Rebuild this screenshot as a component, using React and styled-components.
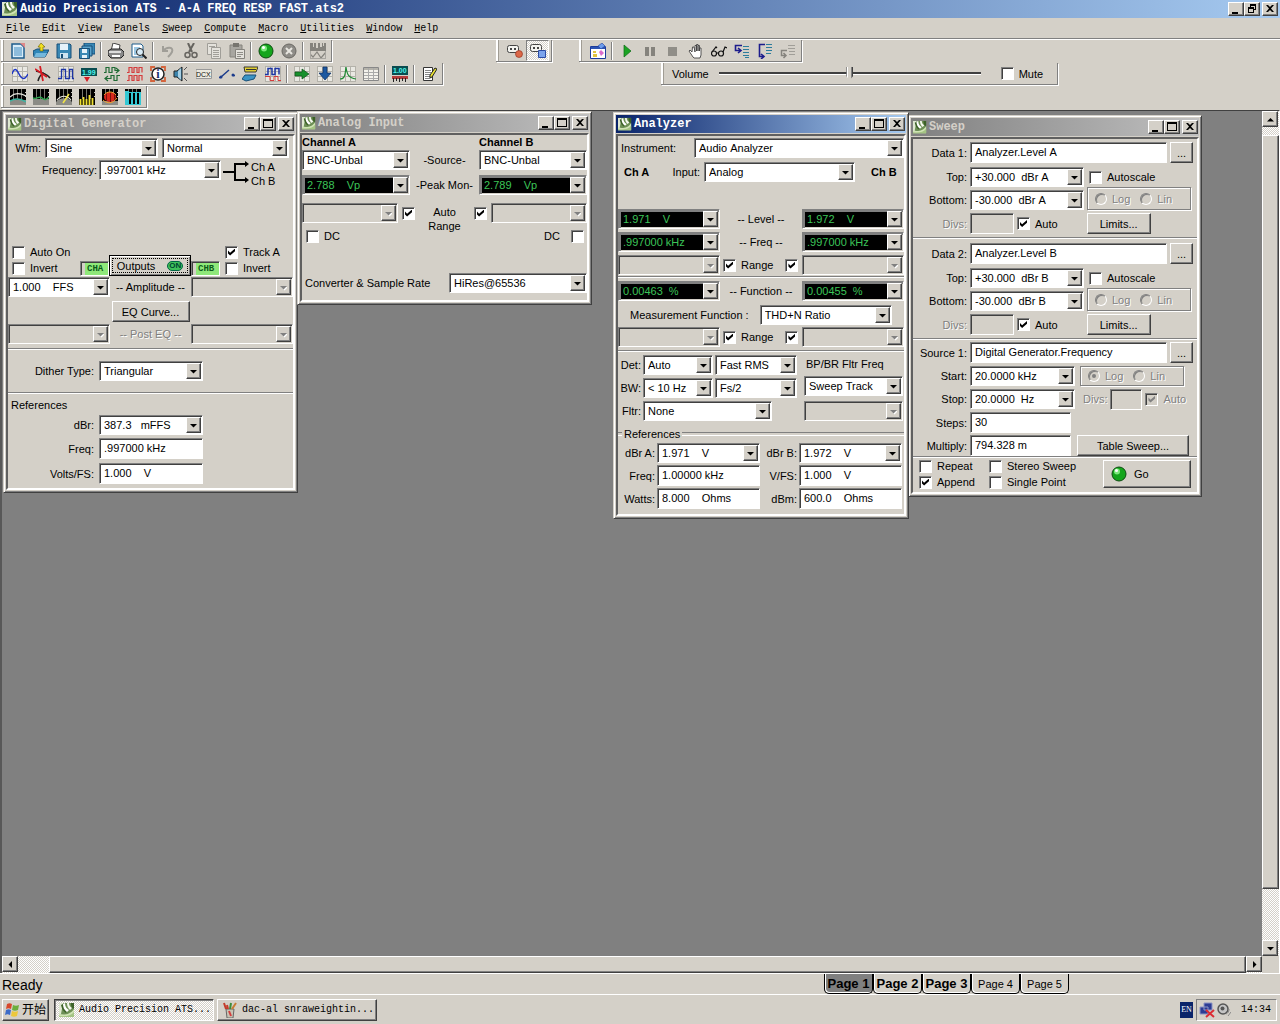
import React, { useState } from "react"
import styled, { createGlobalStyle, css } from "styled-components"

const FACE = "#d4d0c8"
const SHADE = "#808080"
const DARK = "#404040"
const UI = `"Liberation Sans", Arial, sans-serif`
const MONO = `"Liberation Mono", "Noto Sans CJK SC", monospace`

const GlobalStyle = createGlobalStyle`
* { box-sizing: border-box; }
body {
  margin: 0;
  background: ${FACE};
  color: #000;
  font: 11px/14px ${UI};
}
button, input, select {
  margin: 0;
  font: inherit;
  color: inherit;
}
`

const raised = css`
  border: 1px solid;
  border-color: #fff ${DARK} ${DARK} #fff;
  box-shadow: inset -1px -1px ${SHADE};
  background: ${FACE};
`
const sunken = css`
  border: 1px solid;
  border-color: ${SHADE} #fff #fff ${SHADE};
  box-shadow: inset 1px 1px ${DARK};
`
const dither = css`
  background: repeating-conic-gradient(#fff 0 25%, ${FACE} 0 50%) 0 0 / 2px 2px;
`
const embossed = css`
  color: ${SHADE};
  text-shadow: 1px 1px #fff;
`

/* ---------- shell ---------- */
const Shell = styled.div`
  display: flex;
  flex-direction: column;
  min-height: 100vh;
  background: ${FACE};
`
const AppTitle = styled.header`
  display: flex;
  align-items: center;
  height: 18px;
  padding: 0 2px;
  gap: 2px;
  color: #fff;
  font: bold 12px/18px ${MONO};
  background: linear-gradient(90deg, #0a246a, #a6caf0);
`
const TitleText = styled.span`
  flex: 1;
  white-space: nowrap;
`
const TitleButtons = styled.div`
  display: flex;
  & > button:last-child { margin-left: 2px; }
`
const CaptionButton = styled.button`
  ${raised}
  display: flex;
  width: 16px;
  height: 14px;
  padding: 0;
  align-items: center;
  justify-content: center;
`
const MenuBar = styled.nav`
  display: flex;
  align-items: center;
  gap: 12px;
  height: 22px;
  padding: 0 6px;
  font: 10px/14px ${MONO};
  border-bottom: 1px solid #fff;
  box-shadow: inset 0 -1px ${SHADE};
`
const MenuItem = styled.button`
  border: 0;
  padding: 0;
  background: none;
  &::first-letter { text-decoration: underline; }
`
const ToolRows = styled.div`
  display: flex;
  flex-direction: column;
  gap: 1px;
  padding-bottom: 2px;
`
const ToolRow = styled.div`
  display: flex;
  height: 22px;
  padding-left: 1px;
`
const Band = styled.div`
  display: flex;
  align-items: center;
  margin-left: ${p => p.$left || 0}px;
  padding-right: 2px;
  border-right: 1px solid ${SHADE};
  border-bottom: 1px solid ${SHADE};
  box-shadow: 1px 1px #fff;
`
const Grip = styled.span`
  width: 5px;
  align-self: stretch;
  margin-right: ${p => p.$gap || 0}px;
  background: #fff;
  border-right: 2px solid ${FACE};
  box-shadow: inset -1px 0 #a09c94;
`
const ToolButton = styled.button`
  display: flex;
  align-items: center;
  justify-content: center;
  width: 23px;
  height: 21px;
  padding: 0;
  border: 0;
  background: none;
  ${p => p.$pressed && css`
    ${dither}
    border: 1px solid;
    border-color: ${SHADE} #fff #fff ${SHADE};
  `}
`
const ToolDivider = styled.span`
  width: 2px;
  height: 18px;
  margin: 0 2px;
  border-left: 1px solid ${SHADE};
  border-right: 1px solid #fff;
`
const VolumeLabel = styled.label`
  display: flex;
  align-items: center;
  gap: 10px;
  margin-left: 6px;
`
const VolumeSlider = styled.input`
  appearance: none;
  width: 262px;
  height: 16px;
  background: none;
  &::-webkit-slider-runnable-track {
    height: 3px;
    background: linear-gradient(${DARK} 0 2px, #fff 2px);
  }
  &::-webkit-slider-thumb {
    appearance: none;
    width: 7px;
    height: 13px;
    margin-top: -5px;
    background: linear-gradient(90deg, ${SHADE} 0 1px, #fff 1px 2px, ${FACE} 2px 5px, ${SHADE} 5px 6px, ${DARK} 6px);
    clip-path: polygon(0 0, 100% 0, 100% 70%, 50% 100%, 0 70%);
  }
`

/* ---------- workspace ---------- */
const Workspace = styled.main`
  flex: 1;
  display: grid;
  grid-template: 1fr 17px / 1fr 17px;
  border-top: 1px solid ${DARK};
  border-left: 2px solid #585858;
  border-right: 1px solid #fff;
`
const Canvas = styled.div`
  position: relative;
  overflow: hidden;
  min-height: 420px;
  background: ${SHADE};
`
const ScrollBar = styled.div`
  ${dither}
  display: flex;
  flex-direction: ${p => (p.$vertical ? "column" : "row")};
`
const ScrollButton = styled.button`
  ${raised}
  display: flex;
  align-items: center;
  justify-content: center;
  flex: none;
  width: 16px;
  height: 16px;
  padding: 0;
`
const ScrollThumb = styled.div`
  ${raised}
  flex: ${p => p.$grow};
`
const ScrollGap = styled.div`
  flex: ${p => p.$grow};
`

const Frame = styled.section`
  position: absolute;
  left: ${p => p.$x}px;
  top: ${p => p.$y}px;
  width: ${p => p.$w}px;
  height: ${p => p.$h}px;
  display: flex;
  flex-direction: column;
  gap: 1px;
  padding: 2px;
  background: ${FACE};
  border: 1px solid;
  border-color: ${FACE} ${DARK} ${DARK} ${FACE};
  box-shadow: inset 1px 1px #fff, inset -1px -1px ${SHADE};
`
const FrameTitle = styled.header`
  display: flex;
  align-items: center;
  gap: 2px;
  height: 18px;
  padding: 0 1px 0 2px;
  font: bold 12px/18px ${MONO};
  color: ${p => (p.$active ? "#fff" : FACE)};
  background: ${p => (p.$active
    ? "linear-gradient(90deg, #0a246a, #a6caf0)"
    : "linear-gradient(90deg, #808080, #c0c0c0)")};
`
const Client = styled.div`
  flex: 1;
  border: 2px solid;
  border-color: #606060 #fff #fff #606060;
`

/* ---------- form parts ---------- */
const Row = styled.div`
  display: flex;
  align-items: ${p => p.$align || "center"};
  justify-content: ${p => p.$justify || "flex-start"};
  height: ${p => p.$h || 20}px;
  margin-top: ${p => p.$top || 0}px;
  padding-left: ${p => p.$indent || 0}px;
  gap: ${p => p.$gap || 0}px;
`
const Column = styled.div`
  width: ${p => (p.$w ? p.$w + "px" : "auto")};
  margin-left: ${p => p.$left || 0}px;
`
const Caption = styled.label`
  flex: none;
  width: ${p => (p.$w ? p.$w + "px" : "auto")};
  text-align: right;
  white-space: nowrap;
  ${p => p.$off && embossed}
`
const Middle = styled.span`
  flex: 1;
  text-align: center;
  white-space: nowrap;
  ${p => p.$off && embossed}
`
const Strong = styled.span`
  width: ${p => (p.$w ? p.$w + "px" : "auto")};
  padding-left: ${p => p.$indent || 0}px;
  font-weight: bold;
`
const TwoLines = styled.span`
  flex: 1;
  padding-top: 2px;
  text-align: center;
`
const Rule = styled.hr`
  width: 100%;
  height: 2px;
  margin: ${p => p.$top || 0}px 0 0;
  border: 0;
  border-top: 1px solid ${SHADE};
  border-bottom: 1px solid #fff;
`
const GroupTitle = styled.h3`
  display: flex;
  align-items: center;
  gap: 2px;
  height: 14px;
  margin: ${p => p.$top}px 0 0;
  padding-left: ${p => (p.$line ? 0 : 3)}px;
  font: inherit;
  ${p => p.$line && css`
    &::before, &::after {
      content: "";
      width: 4px;
      height: 2px;
      border-top: 1px solid ${SHADE};
      border-bottom: 1px solid #fff;
    }
    &::after { flex: 1; }
  `}
`
const ComboBox = styled.span`
  ${sunken}
  display: flex;
  flex: none;
  width: ${p => p.$w}px;
  height: 20px;
  padding: 1px;
  background: ${p => (p.$off ? FACE : p.$led ? "#000" : "#fff")};
  color: ${p => (p.$led ? "#3cc458" : "#000")};
  ${p => p.$led && css`box-shadow: inset 2px 2px ${SHADE}, inset -1px -1px ${FACE};`}
`
const ComboSelect = styled.select`
  appearance: none;
  flex: 1;
  min-width: 0;
  padding: 0 0 0 3px;
  border: 0;
  outline: 0;
  background: none;
  opacity: 1;
`
const ComboArrow = styled.span`
  ${raised}
  display: flex;
  align-items: center;
  justify-content: center;
  width: 15px;
  pointer-events: none;
`
const TextField = styled.input`
  ${sunken}
  flex: none;
  width: ${p => p.$w}px;
  height: 21px;
  padding: 0 4px 2px;
  outline: 0;
  background: ${p => (p.disabled ? FACE : "#fff")};
`
const PushButton = styled.button`
  ${raised}
  display: flex;
  align-items: center;
  justify-content: center;
  flex: none;
  width: ${p => p.$w}px;
  height: ${p => p.$h || 21}px;
  margin-left: ${p => p.$left || 0}px;
  padding: 0;
  white-space: nowrap;
`
const OutputsButton = styled(PushButton)`
  gap: 12px;
  border-color: #000;
  box-shadow: inset 1px 1px #fff, inset -1px -1px ${SHADE};
  outline: 1px dotted #000;
  outline-offset: -4px;
`
const GoButton = styled(PushButton)`
  justify-content: flex-start;
  gap: 7px;
  padding-left: 7px;
`
const OnPill = styled.span`
  width: 16px;
  height: 10px;
  border: 1px solid #064;
  border-radius: 5px;
  background: #3fc05a;
  color: #043;
  font: bold 8px/8px ${UI};
  text-align: center;
`
const Lamp = styled.span`
  ${sunken}
  width: 29px;
  height: 15px;
  padding-left: 6px;
  background: linear-gradient(90deg, ${FACE} 0 4px, #8fe87a 4px);
  color: #0a5a18;
  font: bold 9px/14px ${MONO};
`
const CheckLabel = styled.label`
  display: flex;
  align-items: center;
  height: 16px;
  gap: 5px;
  white-space: nowrap;
  ${p => p.$off && embossed}
`
const TrailingCheck = styled(CheckLabel)`
  gap: 11px;
  padding-right: 3px;
`
const Tick = styled.input`
  ${sunken}
  appearance: none;
  flex: none;
  width: 13px;
  height: 13px;
  background: ${p => (p.disabled ? FACE : "#fff")};
  &:checked::before {
    content: "";
    display: block;
    width: 7px;
    height: 7px;
    margin: 2px;
    background: ${p => (p.disabled ? SHADE : "#000")};
    clip-path: polygon(0 30%, 30% 60%, 100% 0, 100% 40%, 30% 100%, 0 72%);
  }
`
const RadioGroup = styled.div`
  display: flex;
  align-items: center;
  gap: 10px;
  width: 104px;
  height: ${p => p.$h}px;
  padding-left: 7px;
  border: 1px solid ${SHADE};
  box-shadow: 1px 1px #fff, inset 1px 1px #fff;
`
const Radio = styled.input`
  appearance: none;
  width: 12px;
  height: 12px;
  border: 1px solid;
  border-color: ${SHADE} #fff #fff ${SHADE};
  border-radius: 50%;
  box-shadow: inset 1px 1px ${SHADE};
  &:checked::before {
    content: "";
    display: block;
    width: 4px;
    height: 4px;
    margin: 3px;
    border-radius: 50%;
    background: ${SHADE};
  }
`

/* ---------- status bar and taskbar ---------- */
const StatusBar = styled.footer`
  display: flex;
  align-items: flex-start;
  height: 22px;
  border-top: 1px solid #fff;
  border-bottom: 1px solid #fff;
`
const StatusText = styled.span`
  width: 824px;
  padding: 4px 2px 0;
  font-size: 14px;
`
const PageTab = styled.button`
  width: 49px;
  height: 20px;
  padding: 0;
  border: 1px solid #000;
  border-top: 0;
  border-radius: 0 0 5px 5px;
  box-shadow: inset 1px -1px #fff;
  background: ${p => (p.$current ? SHADE : FACE)};
  font: ${p => (p.$strong ? "bold 13px" : "11px")}/20px ${UI};
  white-space: nowrap;
`
const Taskbar = styled.footer`
  display: flex;
  align-items: center;
  height: 29px;
  padding: 0 3px 0 2px;
  font: 10px/14px ${MONO};
`
const StartButton = styled.button`
  ${raised}
  display: flex;
  align-items: center;
  gap: 1px;
  width: 47px;
  height: 22px;
  margin-right: 5px;
  padding: 0 1px;
  font: 12px/18px "Liberation Sans", "Noto Sans CJK SC", sans-serif;
`
const TaskButton = styled.button`
  ${raised}
  display: flex;
  align-items: center;
  gap: 4px;
  width: 160px;
  height: 22px;
  margin-right: 3px;
  padding: 0 4px;
  white-space: nowrap;
  ${p => p.$pressed && css`
    ${dither}
    border-color: ${DARK} #fff #fff ${DARK};
    box-shadow: inset 1px 1px ${SHADE};
  `}
`
const Language = styled.span`
  width: 13px;
  height: 16px;
  margin: 0 3px 0 auto;
  background: #0a246a;
  color: #fff;
  font: 8px/16px "Liberation Serif", serif;
  text-align: center;
`
const Tray = styled.div`
  display: flex;
  align-items: center;
  gap: 2px;
  width: 81px;
  height: 22px;
  padding: 0 2px;
  border: 1px solid;
  border-color: ${SHADE} #fff #fff ${SHADE};
`
const Clock = styled.time`
  margin-left: auto;
  padding-right: 3px;
`

/* ---------- drawings ---------- */
const Drawing = styled.svg`
  display: block;
  flex: none;
`
const LeafLogo = ({ size = 16 }) => (
  <Drawing width={size} height={size} viewBox="0 0 16 16">
    <path d="M0 1h15v14H0z" fill="#6d8f55" />
    <path d="M0 1h4L2 12l-2 2z" fill="#dfe8d2" />
    <path d="M2 3c1 4 2 6 5 8l1-2C6 7 5 5 4 2z" fill="#3c6128" />
    <path d="M4 2l2-1c0 4 2 6 4 7l-2 2C5 8 4 5 4 2z" fill="#fff" />
    <path d="M8 1h2c0 2 1 4 3 5l-2 2C9 6 8 4 8 1z" fill="#f4f8ee" />
    <path d="M12 1h3v5l-1 1c-2-2-2-4-2-6z" fill="#3c6128" />
    <path d="M0 12c5 1 11 1 15-5v8H0z" fill="#cfe3b4" />
    <path d="M0 14c6 1 12 0 15-4v5H0z" fill="#a4c483" />
  </Drawing>
)
const Arrow = ({ off, dir = "down" }) => {
  const d = {
    down: "M0 2h7L3.500 5.500z",
    up: "M0 5.500h7L3.500 2z",
    left: "M5 0v7L1.500 3.500z",
    right: "M2 0v7l3.500-3.500z",
  }[dir]
  return (
    <Drawing width="7" height="7" viewBox="0 0 7 7">
      {off && <path d={d} fill="#fff" transform="translate(1 1)" />}
      <path d={d} fill={off ? SHADE : "#000"} />
    </Drawing>
  )
}
const captionShapes = {
  Minimize: <path d="M1 8h6v2H1z" />,
  Maximize: <path d="M0 0h10v9H0zM1 2v6h8V2z" fillRule="evenodd" />,
  Restore: <path d="M3 0h6v6H7v3H1V3h2zM4 2v1h3v2h1V2zM2 5v3h4V5z" fillRule="evenodd" />,
  Close: <path d="M1 1h2l2 2 2-2h2L6 4.500 9 8H7L5 6 3 8H1l3-3.500z" />,
}
const CaptionButtons = ({ middle = "Maximize" }) => (
  <TitleButtons>
    {["Minimize", middle, "Close"].map(n => (
      <CaptionButton key={n} aria-label={n}>
        <Drawing width="10" height="10" viewBox="0 0 10 10">{captionShapes[n]}</Drawing>
      </CaptionButton>
    ))}
  </TitleButtons>
)

const grid = (
  <>
    <path d="M0 0h16v16H0z" fill="#e9e8e2" />
    <path d="M.5 0v16M5.500 0v16M10.500 0v16M15.500 0v16M0 .5h16M0 5.500h16M0 10.500h16M0 15.500h16" stroke="#b4b2aa" />
  </>
)
// black screen with a dotted graticule over a grey base
const plot = (
  <>
    <path d="M0 0h16v16H0z" fill="#000" />
    <path d="M0 3.500h16M0 7.500h16" stroke="#c8c8c0" strokeDasharray="1 3" strokeDashoffset="1" />
    <path d="M3.500 0v10M7.500 0v10M11.500 0v10" stroke="#77776f" />
  </>
)
const line = (d, stroke, width = 1) => <path d={d} fill="none" stroke={stroke} strokeWidth={width} />
const digits = (x, y, text, fill) => (
  <text x={x} y={y} fill={fill} fontFamily="Liberation Sans" fontWeight="bold" fontSize="7">{text}</text>
)

const icons = {
  new: <><path d="M2 1h9l3 3v11H2z" fill="#d8ecf8" stroke="#1c5c8c" strokeWidth="1.500" /><path d="M4 4h8v9H4z" fill="#8cbcdc" /><path d="M10 0h5v5z" fill="#e08888" /></>,
  open: <><path d="M0 8l4-2h3l1 1h8l-4 7H1z" fill="#2f86b8" stroke="#174f78" /><path d="M3 10h11l-2 4H1z" fill="#74b8dc" /><path d="M8 0l4 4h-2v4H7V4H5z" fill="#f2e020" stroke="#6a6000" strokeWidth=".6" /></>,
  save: <><path d="M1 1h13l1 1v13H1z" fill="#3a88b4" stroke="#174f78" /><path d="M4 1h8v6H4z" fill="#e4f2fa" /><path d="M4 10h8v5H4z" fill="#cfe4f0" /><path d="M5 11h2v4H5z" fill="#174f78" /></>,
  saveAll: <><path d="M5 0h11v11H5z" fill="#3a88b4" stroke="#174f78" /><path d="M3 3h10v10H3z" fill="#5aa4cc" stroke="#174f78" /><path d="M.5 5.500h10v10H.5z" fill="#3a88b4" stroke="#174f78" /><path d="M3 6h5v4H3zM3 12h5v3H3z" fill="#e4f2fa" /></>,
  print: <><path d="M5 0l7 2-1 6H3z" fill="#fff" stroke="#444" /><path d="M0 8l3-2h10l3 3v3l-3 3H3l-3-3z" fill="#888" stroke="#222" /><path d="M1 8h12v2H1z" fill="#ddd" /><path d="M4 12h8v2H4z" fill="#fff" /></>,
  preview: <><path d="M1 1h9l2 2v11H1z" fill="#fff" stroke="#1c5c8c" /><path d="M3 4h6v8H3z" fill="#9cc8e4" /><circle cx="9" cy="9" r="3.500" fill="#d8ecf8" stroke="#222" />{line("M11.500 11.500l4 4", "#222", 2)}</>,
  undo: <>{line("M3 3v5h5M3 8c4-5 11-4 9 1-1 2-3 4-4 5", "#a09e98", 2)}</>,
  cut: <>{line("M5 0l4 9M11 0L6 9", "#66645f", 2)}<circle cx="4.500" cy="12" r="2.500" fill="none" stroke="#66645f" strokeWidth="1.500" /><circle cx="11.500" cy="12" r="2.500" fill="none" stroke="#66645f" strokeWidth="1.500" /></>,
  copy: <><path d="M1.500.5h9v11h-9z" fill="#e4e2dc" stroke="#a09e98" /><path d="M5.500 4.500h9v11h-9z" fill="#e4e2dc" stroke="#a09e98" />{line("M7 7.500h6M7 9.500h6M7 11.500h6M7 13.500h6M3 3.500h6", "#a09e98")}</>,
  paste: <><path d="M1 2h12v12H1z" fill="#a8a6a0" stroke="#85837d" /><path d="M4 0h6v4H4z" fill="#77756f" /><path d="M6.500 6.500h9v9h-9z" fill="#e4e2dc" stroke="#85837d" />{line("M8 9.500h6M8 11.500h6M8 13.500h4", "#908e88")}</>,
  go: <><circle cx="8" cy="8" r="7" fill="#14a51c" stroke="#0c4a10" /><circle cx="6" cy="5.500" r="3" fill="#7ce87c" /><circle cx="5.500" cy="4.500" r="1.500" fill="#fff" /></>,
  stop: <><circle cx="8" cy="8" r="7" fill="#8e8c87" stroke="#6a6863" />{line("M5 5l6 6M11 5l-6 6", "#e8e6e0", 2)}</>,
  sweepGraph: <><path d="M0 0h16v8H0z" fill="#85837d" /><path d="M3 0h1v4H3zM6 0h2v5H6zM10 0h2v4h-2zM13 0h1v3h-1z" fill={FACE} />{line("M0 11l3 3 4-5 4 6 5-6", "#85837d", 1.200)}{line("M.5 8v8M15.500 8v8M0 15.500h16", "#a8a6a0")}</>,
  sine: <>{grid}{line("M0 8c2-6 4-6 7 0s6 6 9 0", "#1c34c4", 1.500)}</>,
  meter: <>{line("M1 5c5 1 11 3 14 7M3 15c1-4 3-7 6-8", "#222", 1.500)}{line("M5 0l3 15M0 3l12 8", "#d41c24", 1.800)}</>,
  square: <>{grid}{line("M0 12.500h3.500v-9h4v9h4v-9h3v9h2", "#1c34a4", 1.300)}</>,
  readout: <><path d="M0 2h16v8H0z" fill="#0a4c50" />{digits(1, 9, "1.99", "#4cf4ec")}<path d="M3 11h6l-3 5z" fill="#d41c24" /></>,
  digitalIo: <>{line("M0 6.500h2v-5h3v5h3v-5h3v3h4M12 2l3 2.500-3 2.500", "#1f6a34", 1.200)}{line("M16 9.500h-3v5h-3v-5H7v3H1M4 10l-3 2.500L4 15", "#1f6a34", 1.200)}</>,
  bits: <>{line("M0 6.500h2v-5h3v5h2v-5h3v5h2v-5h3v5M0 14.500h2v-5h3v5h2v-5h3v5h2v-5h3v5", "#d43c3c", 1.200)}</>,
  info: <>{line("M1 5V1h4M11 1h4v4M1 11v4h4M11 15h4v-4", "#d4643c", 1.800)}<circle cx="8" cy="8" r="6" fill="#fff" stroke="#222" strokeWidth="1.500" /><text x="8" y="12" textAnchor="middle" fill="#1c2c6c" fontFamily="Liberation Serif" fontWeight="bold" fontSize="12">i</text></>,
  speaker: <><path d="M1 5h3l5-4v14l-5-4H1z" fill="#3c84ac" stroke="#222" /><path d="M5 5l3-3v12l-3-3z" fill="#a8d0e4" />{line("M11 4l3-3M11 8h4M11 12l3 3", "#555")}</>,
  dcx: <><path d="M0 3.500h15.500v9H0z" fill="#eceadf" stroke="#999" /><text x="0" y="11" fill="#111" fontFamily="Liberation Sans" fontSize="7">DCX</text></>,
  relay: <><circle cx="2" cy="11" r="1.500" fill="#1c3c8c" /><circle cx="14" cy="9" r="1.500" fill="#1c3c8c" />{line("M2 11l8-7M0 11.500h2M14 9.500h2", "#1c3c8c", 1.500)}</>,
  cable: <><path d="M2 1h14l-2 5H3z" fill="#f0dc30" stroke="#333" />{line("M4 3.500h10", "#333", 1.200)}<path d="M3 9h11l-2 4-8 2-4-2z" fill="#3c94c4" stroke="#174f78" /></>,
  clocks: <>{grid}{line("M0 8.500h3v-6h4v6h3v-6h4v6", "#1c34a4", 1.500)}{line("M0 10.500h5v4h4v-4h4v4h3", "#d43c3c")}</>,
  toData: <>{grid}<path d="M1 6h7V3l7 5-7 5v-3H1z" fill="#17902c" stroke="#0c5018" strokeWidth=".7" /></>,
  toTable: <>{grid}<path d="M6 1h4v6h4l-6 7-6-7h4z" fill="#1c58a0" stroke="#0c2c60" strokeWidth=".7" /></>,
  graph: <>{grid}{line("M0 13c5 0 5-4 6-12 1 8 3 11 10 12", "#1f8a34", 1.200)}</>,
  table: <><path d="M.5 1.500h15v13H.5z" fill="#f4f2ec" stroke="#888" /><path d="M1 2h14v2H1z" fill="#b4b2aa" />{line("M1 6.500h14M1 9.500h14M1 12.500h14M5.500 2v12M10.500 2v12", "#aaa")}</>,
  bargraph: <><path d="M0 0h16v9H0z" fill="#0a4c50" />{digits(1, 7, "1.00", "#4cf4ec")}<path d="M0 10h16v3H0z" fill="#b43c3c" />{line("M1.500 12v4M4.500 12v3M7.500 12v4M10.500 12v3M13.500 12v4", "#222")}</>,
  notes: <><path d="M2.500 1.500h9v13h-9z" fill="#fff" stroke="#333" />{line("M4 4.500h6M4 6.500h6M4 8.500h5M4 10.500h6M4 12.500h5", "#888")}<path d="M9 9l5-7 2 1-5 8-2 1z" fill="#e8e030" stroke="#222" /></>,
  plotA: <>{plot}<path d="M0 11h16v5H0z" fill="#8c8c86" />{line("M0 8c4-4 10-4 16-1", "#e8e8e0", 1.200)}{line("M0 12c5-3 10-3 16 1", "#3cb4a0", 1.500)}</>,
  plotB: <>{plot}<path d="M0 10h16v6H0z" fill="#8c8c86" />{line("M0 9c4 2 6-3 9 0s5 1 7-1", "#2ca44c", 1.500)}</>,
  plotC: <>{plot}<path d="M0 13c3-5 13-5 16 0v3H0z" fill="#8c8c86" />{line("M1 11c4-5 10-5 14 0", "#e8e8e0", 1.200)}{line("M7 14l6-9", "#f0e448", 1.600)}</>,
  plotD: <>{plot}{line("M1.500 16v-6M4.500 16V8M7.500 16V10M10.500 16V6M13.500 16V9", "#f0e030", 1.800)}</>,
  plotE: <>{plot}<path d="M0 12h16v4H0z" fill="#8c8c86" /><ellipse cx="8" cy="8" rx="6" ry="5" fill="#d8281c" />{line("M4.500 4v8M8.500 3v10M12.500 4v8", "#7a120c")}{line("M1 11c4 4 10 4 14-2M2 6c3-4 9-4 12 0", "#f0a030")}</>,
  plotF: <>{plot}<path d="M0 2h4v14H0zM6 4h2v12H6zM10 4h2v12h-2zM14 4h2v12h-2z" fill="#34c8d4" />{line("M0 3.500h16M0 15.500h16", "#34c8d4")}</>,
  record: <><rect x=".5" y="2.500" width="11" height="7" rx="2" fill="#f4f4f0" stroke="#444" /><path d="M3 5h2v2H3zM7 5h2v2H7z" fill="#444" /><circle cx="12" cy="11" r="3.500" fill="#dc6848" stroke="#8c2818" strokeWidth=".6" /></>,
  recordStop: <><rect x=".5" y="1.500" width="11" height="7" rx="2" fill="#f4f4f0" stroke="#444" /><path d="M3 4h2v2H3zM7 4h2v2H7z" fill="#444" /><path d="M8.500 7.500h7v7h-7z" fill="#7ca4ec" stroke="#2c4ca4" /></>,
  macro: <><path d="M.5 3.500h15v12H.5z" fill="#fff" stroke="#1c3c9c" /><path d="M1 4h14v2H1z" fill="#2c54b4" /><path d="M8 3l4-3 3 3-4 3z" fill="#6c9cec" stroke="#1c3c9c" strokeWidth=".6" /><path d="M3 8h3v2H3zM3 11h4v3H3z" fill="#e0c440" /><path d="M9 9l2-2 3 3-3 3z" fill="#dc6ccc" /></>,
  run: <path d="M5 2l7 6-7 6z" fill="#1ca424" stroke="#0c6c14" strokeWidth=".7" />,
  pause: <path d="M3 4h4v9H3zM9 4h4v9H9z" fill="#85837d" />,
  halt: <path d="M3 4h9v9H3z" fill="#908e88" />,
  hand: <path d="M4 9L2 7 1 8l4 6 1 1h6l1-3V5h-1.500v3V2.500H10V8 1.500H8.500V8 2.500H7V9L6 4H4.500z" fill="#fff" stroke="#444" strokeWidth=".9" />,
  glasses: <><circle cx="3" cy="10.500" r="2.500" fill="none" stroke="#111" strokeWidth="1.200" /><circle cx="10" cy="10.500" r="2.500" fill="none" stroke="#111" strokeWidth="1.200" />{line("M5.500 10h2M1 9l4-5 1 1M12 9l2-5 2 1", "#111", 1.200)}</>,
  stepIn: <>{line("M8 2.500H1.500v5H6M4 5l3 2.500L4 10", "#1c1c8c", 1.600)}{line("M9 3.500h6M9 6.500h6M9 9.500h6M9 12.500h6M11 14.500h4", "#2c7c9c")}</>,
  stepOver: <>{line("M8 1.500H2.500v12H6M4 11l3 2.500L4 16", "#1c1c8c", 1.600)}{line("M9 1.500h6M9 4.500h6M9 7.500h6M9 10.500h5", "#2c7c9c")}</>,
  stepOut: <>{line("M7 7.500H1.500v5H5M3.500 10L6 12.500 3.500 15", "#85837d", 1.500)}{line("M8 2.500h7M8 5.500h7M9 8.500h6M9 11.500h6", "#a09e98")}</>,
}

const IconButton = ({ name, pressed }) => (
  <ToolButton $pressed={pressed} aria-label={name}>
    <Drawing width="16" height="16" viewBox="0 0 16 16">{icons[name]}</Drawing>
  </ToolButton>
)
const Tools = ({ groups, pressed }) => groups.map((names, i) => (
  <React.Fragment key={i}>
    {i > 0 && <ToolDivider />}
    {names.map(n => <IconButton key={n} name={n} pressed={n === pressed} />)}
  </React.Fragment>
))

const fileTools = [
  ["new", "open", "save", "saveAll"],
  ["print", "preview"],
  ["undo", "cut", "copy", "paste"],
  ["go", "stop"],
  ["sweepGraph"],
]
const panelTools = [
  ["sine", "meter", "square", "readout", "digitalIo", "bits", "info", "speaker", "dcx", "relay", "cable", "clocks"],
  ["toData", "toTable", "graph", "table"],
  ["bargraph"],
  ["notes"],
]
const plotTools = [["plotA", "plotB", "plotC", "plotD", "plotE", "plotF"]]
const macroTools = [
  ["macro"],
  ["run", "pause", "halt", "hand", "glasses", "stepIn", "stepOver", "stepOut"],
]

/* ---------- controls ---------- */
// runs of blanks between number and unit have to survive inside an <option>
const keep = s => s.replace(/ /g, "\u00a0")

const Combo = ({ w, value = "", off, led, id, label }) => (
  <ComboBox $w={w} $off={off} $led={led}>
    <ComboSelect id={id} aria-label={label} disabled={off}>
      <option>{keep(value)}</option>
    </ComboSelect>
    <ComboArrow><Arrow off={off} /></ComboArrow>
  </ComboBox>
)
const Field = ({ w, value = "", id, disabled }) => (
  <TextField $w={w} id={id} defaultValue={keep(value)} disabled={disabled} />
)
const Check = ({ text, on, off, label }) => (
  <CheckLabel $off={off}>
    <Tick type="checkbox" defaultChecked={on} disabled={off} aria-label={text ? undefined : label} />
    {text}
  </CheckLabel>
)
const LogLin = ({ name, h, log }) => (
  <RadioGroup $h={h}>
    <CheckLabel $off><Radio type="radio" name={name} disabled defaultChecked={log} />Log</CheckLabel>
    <CheckLabel $off><Radio type="radio" name={name} disabled />Lin</CheckLabel>
  </RadioGroup>
)
const Panel = ({ title, x, y, w, h, active, children }) => (
  <Frame $x={x} $y={y} $w={w} $h={h}>
    <FrameTitle $active={active}>
      <LeafLogo size={14} />
      <TitleText>{title}</TitleText>
      <CaptionButtons />
    </FrameTitle>
    <Client>{children}</Client>
  </Frame>
)

/* ---------- panels ---------- */
const DigitalGenerator = () => (
  <Panel title="Digital Generator" x={1} y={1} w={295} h={381}>
    <Row $top={2} $gap={4}>
      <Caption $w={33} htmlFor="wfm">Wfm:</Caption>
      <Combo id="wfm" w={113} value="Sine" />
      <Combo w={127} value="Normal" label="Waveform shape" />
    </Row>
    <Row $top={2} $gap={2} $h={26} $align="flex-start">
      <Row><Caption $w={89} htmlFor="gen-freq">Frequency:</Caption></Row>
      <Combo id="gen-freq" w={122} value=".997001 kHz" />
      <Drawing width="26" height="26" viewBox="0 0 26 26">
        <path d="M0 12h12M12 4v16M11 4h12M11 20h12" fill="none" stroke="#000" strokeWidth="2" />
        <path d="M22 1l4 3-4 3zM22 17l4 3-4 3z" />
      </Drawing>
      <Column>
        <div>Ch A</div>
        <div>Ch B</div>
      </Column>
    </Row>
    <Row $top={58} $h={32} $align="flex-end">
      <Row $h={32} $indent={4} $align="flex-start">
        <Column $w={68}>
          <Check text="Auto On" />
          <Check text="Invert" />
        </Column>
      </Row>
      <Lamp>CHA</Lamp>
      <OutputsButton $w={82}>Outputs <OnPill>ON</OnPill></OutputsButton>
      <Lamp>CHB</Lamp>
      <Column $left={5}>
        <Check text="Track A" on />
        <Check text="Invert" />
      </Column>
    </Row>
    <Row $top={1}>
      <Combo w={102} value="1.000    FFS" label="Amplitude A" />
      <Middle>-- Amplitude --</Middle>
      <Combo w={102} off label="Amplitude B" />
    </Row>
    <Row $top={4} $h={21} $justify="center">
      <PushButton $w={78}>EQ Curve...</PushButton>
    </Row>
    <Row $top={2}>
      <Combo w={102} off label="Post EQ A" />
      <Middle $off>-- Post EQ --</Middle>
      <Combo w={102} off label="Post EQ B" />
    </Row>
    <Rule $top={4} />
    <Row $top={11} $gap={5}>
      <Caption $w={86} htmlFor="dither">Dither Type:</Caption>
      <Combo id="dither" w={104} value="Triangular" />
    </Row>
    <Rule $top={11} />
    <GroupTitle $top={4}>References</GroupTitle>
    <Row $top={3} $gap={5}>
      <Caption $w={86} htmlFor="gen-dbr">dBr:</Caption>
      <Combo id="gen-dbr" w={104} value="387.3   mFFS" />
    </Row>
    <Row $top={3} $h={21} $gap={5}>
      <Caption $w={86} htmlFor="gen-ref">Freq:</Caption>
      <Field id="gen-ref" w={104} value=".997000 kHz" />
    </Row>
    <Row $top={4} $h={21} $gap={5}>
      <Caption $w={86} htmlFor="gen-fs">Volts/FS:</Caption>
      <Field id="gen-fs" w={104} value="1.000    V" />
    </Row>
  </Panel>
)

const AnalogInput = () => (
  <Panel title="Analog Input" x={295} y={0} w={295} h={194}>
    <Row $h={14}>
      <Strong $w={177}>Channel A</Strong>
      <Strong>Channel B</Strong>
    </Row>
    <Row $top={1}>
      <Combo w={108} value="BNC-Unbal" label="Source A" />
      <Middle>-Source-</Middle>
      <Combo w={108} value="BNC-Unbal" label="Source B" />
    </Row>
    <Row $top={5}>
      <Combo w={108} value="2.788    Vp" led label="Peak A" />
      <Middle>-Peak Mon-</Middle>
      <Combo w={108} value="2.789    Vp" led label="Peak B" />
    </Row>
    <Row $top={8} $align="flex-start">
      <Row $gap={4}>
        <Combo w={96} off label="Range A" />
        <Check on label="Auto range A" />
      </Row>
      <TwoLines>Auto<br />Range</TwoLines>
      <Row $gap={4}>
        <Check on label="Auto range B" />
        <Combo w={96} off label="Range B" />
      </Row>
    </Row>
    <Row $top={6} $h={14} $indent={4} $justify="space-between">
      <Check text="DC" />
      <TrailingCheck>DC<Tick type="checkbox" /></TrailingCheck>
    </Row>
    <Row $top={30} $indent={3} $justify="space-between">
      <Caption htmlFor="rate">Converter &amp; Sample Rate</Caption>
      <Combo id="rate" w={138} value="HiRes@65536" />
    </Row>
  </Panel>
)

const ReadoutPair = ({ top, a, b, text }) => (
  <Row $top={top}>
    <Combo w={102} value={a} led label={text + " A"} />
    <Middle>-- {text} --</Middle>
    <Combo w={102} value={b} led label={text + " B"} />
  </Row>
)
const RangePair = ({ top }) => (
  <Row $top={top}>
    <Combo w={102} off label="Range A" />
    <Row $gap={12} $indent={3}>
      <Check on text="Range" />
      <Check on label="Range B auto" />
    </Row>
    <Middle />
    <Combo w={102} off label="Range B" />
  </Row>
)

const Analyzer = () => (
  <Panel title="Analyzer" x={611} y={1} w={296} h={407} active>
    <Row $top={2} $indent={3} $justify="space-between">
      <Caption htmlFor="instrument">Instrument:</Caption>
      <Combo id="instrument" w={210} value="Audio Analyzer" />
    </Row>
    <Row $top={4} $gap={4}>
      <Strong $w={38} $indent={6}>Ch A</Strong>
      <Caption $w={40} htmlFor="input">Input:</Caption>
      <Combo id="input" w={151} value="Analog" />
      <Strong $indent={12}>Ch B</Strong>
    </Row>
    <ReadoutPair top={27} text="Level" a="1.971    V" b="1.972    V" />
    <ReadoutPair top={3} text="Freq" a=".997000 kHz" b=".997000 kHz" />
    <RangePair top={3} />
    <Rule $top={1} />
    <ReadoutPair top={3} text="Function" a="0.00463  %" b="0.00455  %" />
    <Row $top={4} $indent={12} $gap={11}>
      <Caption htmlFor="function">Measurement Function :</Caption>
      <Combo id="function" w={132} value="THD+N Ratio" />
    </Row>
    <RangePair top={2} />
    <Rule $top={3} />
    <Row $top={3} $h={66} $align="flex-start">
      <Column $w={179}>
        <Row $gap={2}>
          <Caption $w={23} htmlFor="det">Det:</Caption>
          <Combo id="det" w={70} value="Auto" />
          <Combo w={82} value="Fast RMS" label="Detector" />
        </Row>
        <Row $top={3} $gap={2}>
          <Caption $w={23} htmlFor="bw">BW:</Caption>
          <Combo id="bw" w={70} value="< 10 Hz" />
          <Combo w={82} value="Fs/2" label="Bandwidth high" />
        </Row>
        <Row $top={3} $gap={2}>
          <Caption $w={23} htmlFor="fltr">Fltr:</Caption>
          <Combo id="fltr" w={129} value="None" />
        </Row>
      </Column>
      <Column $left={7}>
        <Row $h={17} $indent={2}><Caption htmlFor="bpbr">BP/BR Fltr Freq</Caption></Row>
        <Row $top={4}><Combo id="bpbr" w={99} value="Sweep Track" /></Row>
        <Row $top={5}><Combo w={99} off label="Filter frequency" /></Row>
      </Column>
    </Row>
    <GroupTitle $top={6} $line>References</GroupTitle>
    <Row $top={2} $gap={2}>
      <Caption $w={37} htmlFor="dbra">dBr A:</Caption>
      <Combo id="dbra" w={103} value="1.971    V" />
      <Caption $w={35} htmlFor="dbrb">dBr B:</Caption>
      <Combo id="dbrb" w={103} value="1.972    V" />
    </Row>
    <Row $top={2} $h={21} $gap={2}>
      <Caption $w={37} htmlFor="an-freq">Freq:</Caption>
      <Field id="an-freq" w={103} value="1.00000 kHz" />
      <Caption $w={35} htmlFor="vfs">V/FS:</Caption>
      <Field id="vfs" w={103} value="1.000    V" />
    </Row>
    <Row $top={2} $h={21} $gap={2}>
      <Caption $w={37} htmlFor="watts">Watts:</Caption>
      <Field id="watts" w={103} value="8.000    Ohms" />
      <Caption $w={35} htmlFor="dbm">dBm:</Caption>
      <Field id="dbm" w={103} value="600.0    Ohms" />
    </Row>
  </Panel>
)

const SweepData = ({ n, channel, top }) => (
  <>
    <Row $top={top} $h={21} $gap={3}>
      <Caption $w={54} htmlFor={"data" + n}>Data {n}:</Caption>
      <Field id={"data" + n} w={197} value={"Analyzer.Level " + channel} />
      <PushButton $w={23}>...</PushButton>
    </Row>
    <Row $top={4} $gap={3}>
      <Caption $w={54} htmlFor={"top" + n}>Top:</Caption>
      <Combo id={"top" + n} w={114} value={"+30.000  dBr " + channel} />
      <Row $indent={2}><Check text="Autoscale" /></Row>
    </Row>
    <Row $h={23} $gap={3} $align="flex-end">
      <Row><Caption $w={54} htmlFor={"bottom" + n}>Bottom:</Caption></Row>
      <Combo id={"bottom" + n} w={114} value={"-30.000  dBr " + channel} />
      <LogLin name={"scale" + n} h={23} />
    </Row>
    <Row $top={3} $h={21} $gap={3}>
      <Caption $w={54} $off htmlFor={"divs" + n}>Divs:</Caption>
      <Field id={"divs" + n} w={44} disabled />
      <Check text="Auto" on />
      <PushButton $w={64} $left={26}>Limits...</PushButton>
    </Row>
  </>
)

const Sweep = () => (
  <Panel title="Sweep" x={906} y={4} w={294} h={382}>
    <SweepData n={1} channel="A" top={3} />
    <Rule $top={3} />
    <SweepData n={2} channel="B" top={4} />
    <Rule $top={3} />
    <Row $top={2} $h={21} $gap={3}>
      <Caption $w={54} htmlFor="source1">Source 1:</Caption>
      <Field id="source1" w={197} value="Digital Generator.Frequency" />
      <PushButton $w={23}>...</PushButton>
    </Row>
    <Row $top={3} $gap={3}>
      <Caption $w={54} htmlFor="start">Start:</Caption>
      <Combo id="start" w={105} value="20.0000 kHz" />
      <Row $indent={2}><LogLin name="source" h={20} log /></Row>
    </Row>
    <Row $top={3} $gap={3}>
      <Caption $w={54} htmlFor="stop">Stop:</Caption>
      <Combo id="stop" w={105} value="20.0000  Hz" />
      <Row $gap={3} $indent={5}>
        <Caption $off htmlFor="divs3">Divs:</Caption>
        <Field id="divs3" w={32} disabled />
        <Check text="Auto" on off />
      </Row>
    </Row>
    <Row $top={3} $h={21} $gap={3}>
      <Caption $w={54} htmlFor="steps">Steps:</Caption>
      <Field id="steps" w={101} value="30" />
    </Row>
    <Row $top={2} $h={21} $gap={3}>
      <Caption $w={54} htmlFor="multiply">Multiply:</Caption>
      <Field id="multiply" w={101} value="794.328 m" />
      <PushButton $w={112} $left={3}>Table Sweep...</PushButton>
    </Row>
    <Rule />
    <Row $h={32} $indent={6}>
      <Column $w={70}>
        <Check text="Repeat" />
        <Check text="Append" on />
      </Column>
      <Column $w={114}>
        <Check text="Stereo Sweep" />
        <Check text="Single Point" />
      </Column>
      <GoButton $w={88} $h={28}>
        <Drawing width="16" height="16" viewBox="0 0 16 16">{icons.go}</Drawing>
        Go
      </GoButton>
    </Row>
  </Panel>
)

const menus = ["File", "Edit", "View", "Panels", "Sweep", "Compute", "Macro", "Utilities", "Window", "Help"]

const App = () => {
  const [page, setPage] = useState(1)

  return (
    <Shell>
      <GlobalStyle />
      <AppTitle>
        <LeafLogo />
        <TitleText>Audio Precision ATS - A-A FREQ RESP FAST.ats2</TitleText>
        <CaptionButtons middle="Restore" />
      </AppTitle>
      <MenuBar>
        {menus.map(m => <MenuItem key={m}>{m}</MenuItem>)}
      </MenuBar>

      <ToolRows>
        <ToolRow>
          <Band><Grip /><Tools groups={fileTools} /></Band>
          <Band $left={164}><Grip $gap={2} /><Tools groups={[["record", "recordStop"]]} pressed="recordStop" /></Band>
          <Band $left={27}><Grip $gap={2} /><Tools groups={macroTools} /></Band>
        </ToolRow>
        <ToolRow>
          <Band><Grip $gap={2} /><Tools groups={panelTools} /></Band>
          <Band $left={218}>
            <Grip />
            <VolumeLabel>
              Volume
              <VolumeSlider type="range" min="0" max="100" defaultValue="50" />
            </VolumeLabel>
            <Row $indent={20} $gap={12}><Check text="Mute" /><span /></Row>
          </Band>
        </ToolRow>
        <ToolRow>
          <Band><Grip /><Tools groups={plotTools} /></Band>
        </ToolRow>
      </ToolRows>

      <Workspace>
        <Canvas>
          <DigitalGenerator />
          <AnalogInput />
          <Sweep />
          <Analyzer />
        </Canvas>
        <ScrollBar $vertical>
          <ScrollButton aria-label="Scroll up"><Arrow dir="up" /></ScrollButton>
          <ScrollGap $grow={8} />
          <ScrollThumb $grow={754} />
          <ScrollGap $grow={51} />
          <ScrollButton aria-label="Scroll down"><Arrow /></ScrollButton>
        </ScrollBar>
        <ScrollBar>
          <ScrollButton aria-label="Scroll left"><Arrow dir="left" /></ScrollButton>
          <ScrollGap $grow={31} />
          <ScrollThumb $grow={1197} />
          <ScrollButton aria-label="Scroll right"><Arrow dir="right" /></ScrollButton>
        </ScrollBar>
      </Workspace>

      <StatusBar>
        <StatusText>Ready</StatusText>
        {[1, 2, 3, 4, 5].map(n => (
          <PageTab key={n} $strong={n < 4} $current={n === page} onClick={() => setPage(n)}>
            Page {n}
          </PageTab>
        ))}
      </StatusBar>

      <Taskbar>
        <StartButton>
          <Drawing width="17" height="16" viewBox="0 0 17 16">
            <path d="M3 2c2-1 3-1 5 0L7 7C5 6 4 6 2 7z" fill="#d8482c" />
            <path d="M9 3c2 1 4 1 6 0l-1 5c-2 1-4 1-6 0z" fill="#6cae3c" />
            <path d="M2 8c2-1 3-1 5 0l-1 5c-2-1-3-1-5 0z" fill="#3c6cc8" />
            <path d="M8 9c2 1 4 1 6 0l-1 5c-2 1-4 1-6 0z" fill="#ecc83c" />
          </Drawing>
          开始
        </StartButton>
        <TaskButton $pressed><LeafLogo />Audio Precision ATS...</TaskButton>
        <TaskButton>
          <Drawing width="16" height="16" viewBox="0 0 16 16">
            <path d="M4 7h8l-1 9H5z" fill="#c8c4b4" stroke="#666" />
            <path d="M4 7L2 1M6 7L5 3" stroke="#c43c2c" strokeWidth="2" />
            <path d="M8 7l1-6" stroke="#3c8c3c" strokeWidth="2" />
            <path d="M10 7l4-6" stroke="#c87c34" strokeWidth="2" />
            <path d="M7 9l2 5" stroke="#d43c3c" strokeWidth="2" />
          </Drawing>
          dac-al snraweightin...
        </TaskButton>
        <Language>EN</Language>
        <Tray>
          <Drawing width="16" height="16" viewBox="0 0 16 16">
            <path d="M5 1h8v7H5zM1 5h8v7H1z" fill="#2c3c94" stroke="#8c94c4" />
            <path d="M7 8l8 7M15 8l-8 7" stroke="#dc2c34" strokeWidth="2" />
          </Drawing>
          <Drawing width="14" height="14" viewBox="0 0 14 14">
            <circle cx="6" cy="6" r="5" fill="#c4c4c4" stroke="#555" strokeWidth="1.500" />
            <circle cx="5.500" cy="5.500" r="2" fill="#555" />
            <path d="M9 11c2-1 3-2 3-5M11 13l3-4" fill="none" stroke="#888" />
          </Drawing>
          <Clock>14:34</Clock>
        </Tray>
      </Taskbar>
    </Shell>
  )
}

export default App
